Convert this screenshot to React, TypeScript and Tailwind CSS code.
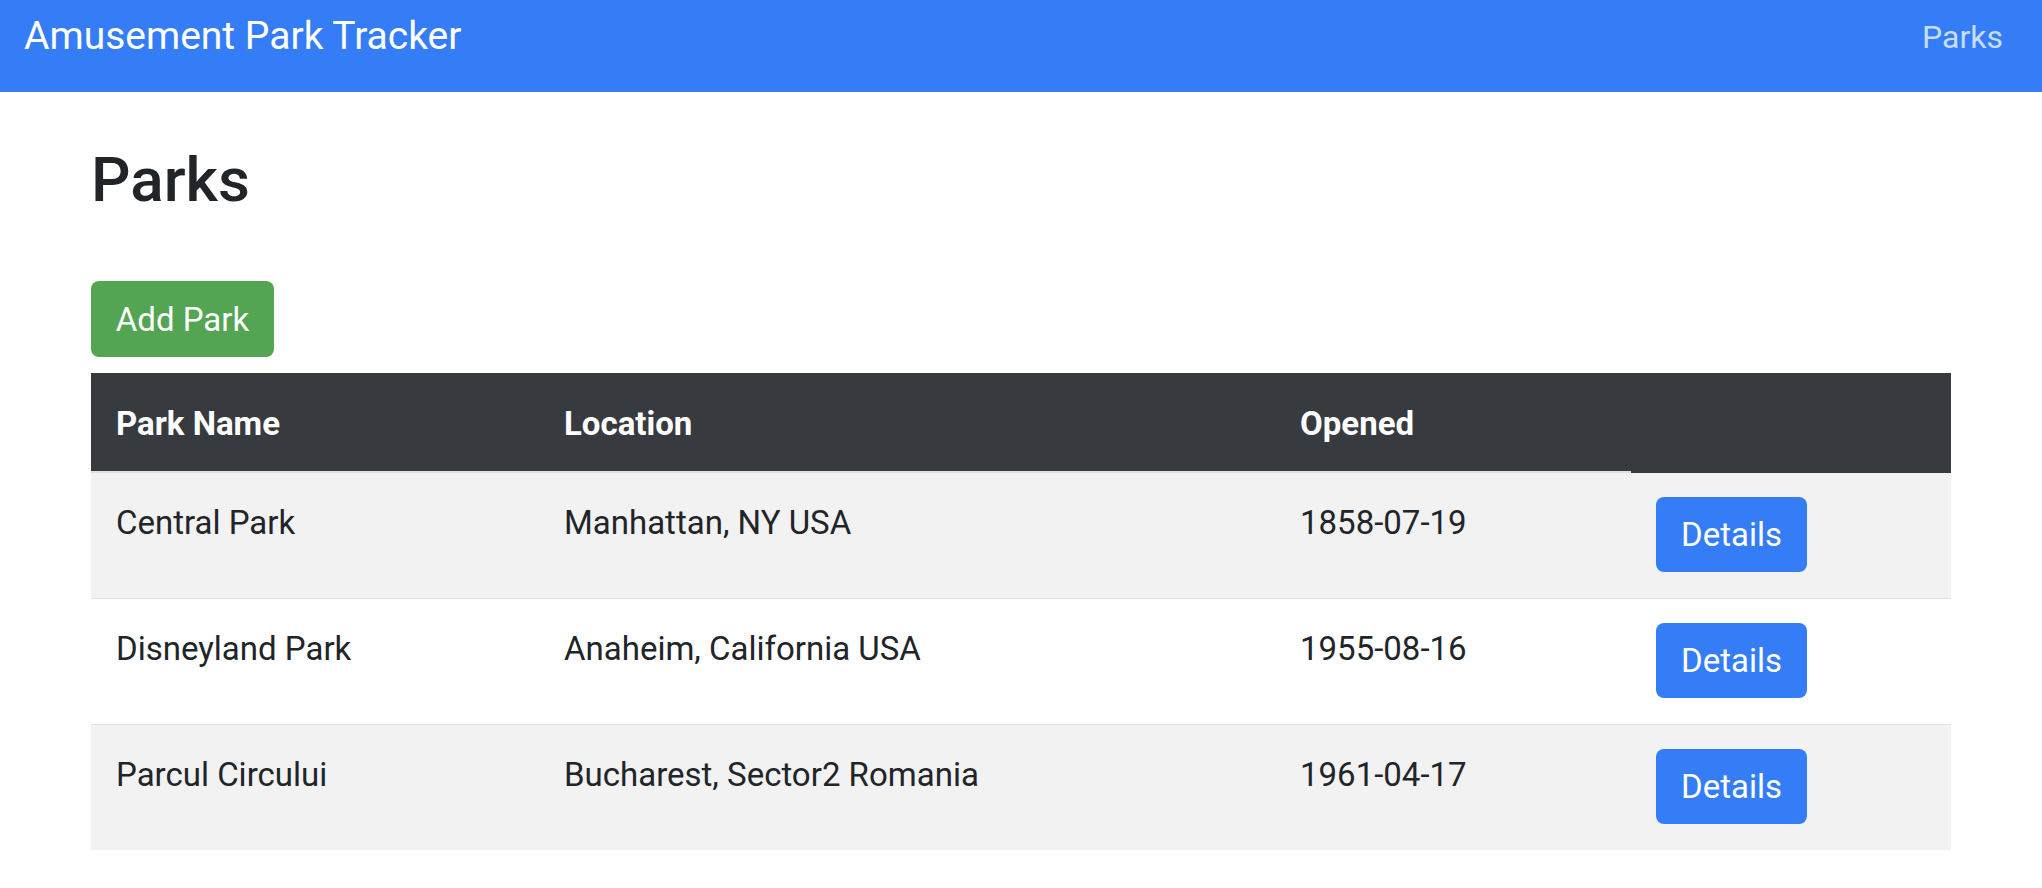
import React from 'react';

const parks = [
  { name: 'Central Park', location: 'Manhattan, NY USA', opened: '1858-07-19' },
  { name: 'Disneyland Park', location: 'Anaheim, California USA', opened: '1955-08-16' },
  { name: 'Parcul Circului', location: 'Bucharest, Sector2 Romania', opened: '1961-04-17' },
];

export default function App() {
  return (
    <div className="min-h-screen bg-white font-['Roboto',sans-serif] text-[#212529]">
      {/* Navbar */}
      <nav className="h-[92px] bg-[#347df6] flex items-start justify-between pl-[24px] pr-[39px]">
        <a href="#" className="mt-[7px] text-[39px] leading-[1.5] text-white">
          Amusement Park Tracker
        </a>
        <a href="#" className="mt-[13px] text-[32px] leading-[1.5] text-[#c8dcfc]">
          Parks
        </a>
      </nav>

      <main className="w-[1860px] mx-auto">
        <h1 className="mt-[51px] text-[62px] font-medium leading-[1.2]">Parks</h1>

        <button className="mt-[64px] w-[183px] h-[76px] rounded-[8px] bg-[#53a553] text-white text-[33px] flex items-center justify-center">
          Add Park
        </button>

        {/* Parks table */}
        <table className="mt-[16px] w-full table-fixed border-collapse text-[33px] leading-[1.5]">
          <colgroup>
            <col className="w-[448px]" />
            <col className="w-[736px]" />
            <col className="w-[356px]" />
            <col className="w-[320px]" />
          </colgroup>
          <thead className="bg-[#373b40] text-white">
            <tr>
              <th className="text-left font-bold pl-[25px] pt-[26px] pb-[22px] border-b-2 border-[#dee2e6]">Park Name</th>
              <th className="text-left font-bold pl-[25px] pt-[26px] pb-[22px] border-b-2 border-[#dee2e6]">Location</th>
              <th className="text-left font-bold pl-[25px] pt-[26px] pb-[22px] border-b-2 border-[#dee2e6]">Opened</th>
              <th className="pt-[26px] pb-[22px] border-b-2 border-[#373b40]"></th>
            </tr>
          </thead>
          <tbody>
            {parks.map((p, i) => (
              <tr key={p.name} className={i % 2 === 0 ? 'bg-[#f2f2f2]' : 'bg-white'}>
                <td className="align-top pl-[25px] pt-[25px] border-t border-[#dee2e6]">{p.name}</td>
                <td className="align-top pl-[25px] pt-[25px] border-t border-[#dee2e6]">{p.location}</td>
                <td className="align-top pl-[25px] pt-[25px] border-t border-[#dee2e6]">{p.opened}</td>
                <td className="align-top pl-[25px] pt-[24px] pb-[26px] border-t border-[#dee2e6]">
                  <button className="w-[151px] h-[75px] rounded-[8px] bg-[#347df6] text-white text-[33px] flex items-center justify-center">
                    Details
                  </button>
                </td>
              </tr>
            ))}
          </tbody>
        </table>
      </main>
    </div>
  );
}
